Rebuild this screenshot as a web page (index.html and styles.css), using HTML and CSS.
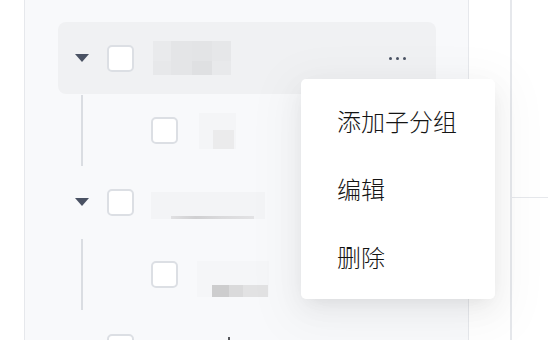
FILE: index.html
```html
<!DOCTYPE html>
<html lang="zh">
<head>
<meta charset="utf-8">
<link rel="stylesheet" href="styles.css">
</head>
<body>
<div class="app">
  <div class="gutter"></div>
  <div class="panel">
    <div class="row row-active">
      <span class="caret"></span>
      <span class="check"></span>
      <div class="mosaic m1">
        <i style="background:#e9eaec"></i><i style="background:#e4e5e7"></i><i style="background:#e3e4e6"></i><i style="background:#e6e7e9"></i>
        <i style="background:#e7e8ea"></i><i style="background:#e4e5e7"></i><i style="background:#dfe0e2"></i><i style="background:#e8e9eb"></i>
      </div>
      <span class="more"><b></b><b></b><b></b></span>
    </div>
    <div class="row child">
      <span class="guide"></span>
      <span class="check"></span>
      <div class="blob b1"><span class="b1-dark"></span></div>
    </div>
    <div class="row">
      <span class="caret"></span>
      <span class="check"></span>
      <div class="blob b2"><span class="b2-line"></span></div>
    </div>
    <div class="row child">
      <span class="guide"></span>
      <span class="check"></span>
      <div class="blob b3"><span class="b3-bar"></span></div>
    </div>
    <div class="row row-last">
      <span class="caret hidden"></span>
      <span class="check"></span>
      <div class="blob b4"><span class="dotmark d1"></span><span class="dotmark d2"></span></div>
    </div>
  </div>
  <div class="mid"></div>
  <div class="side">
    <div class="side-top"></div>
    <div class="side-bottom"></div>
  </div>
</div>
<ul class="menu">
  <li>添加子分组</li>
  <li>编辑</li>
  <li>删除</li>
</ul>
</body>
</html>
```
FILE: styles.css
```css
html, body {
  margin: 0;
  padding: 0;
  width: 548px;
  height: 340px;
  overflow: hidden;
  background: #ffffff;
  font-family: "Noto Sans CJK SC", "Noto Sans", sans-serif;
}
.app {
  display: flex;
  height: 340px;
  overflow: hidden;
}
.gutter {
  width: 24px;
  flex: none;
}
.panel {
  width: 445px;
  flex: none;
  background: #f8f9fb;
  border-left: 1px solid #e6e8ec;
  border-right: 1px solid #e6e8ec;
  padding: 22px 32px 0 33px;
  box-sizing: border-box;
  display: flex;
  flex-direction: column;
  overflow: hidden;
}
.mid {
  width: 41px;
  flex: none;
  border-right: 2px solid #e6e8ec;
}
.side {
  flex: 1;
  display: flex;
  flex-direction: column;
}
.side-top {
  height: 197px;
  border-bottom: 1px solid #e6e8ec;
}
.row {
  height: 72px;
  flex: none;
  display: flex;
  align-items: center;
  padding-left: 17px;
  padding-right: 30px;
  border-radius: 8px;
  position: relative;
}
.row-last {
  height: 30px;
  align-items: flex-start;
  padding-top: 24px;
}
.row-active {
  background: #f0f1f3;
}
.caret {
  width: 0;
  height: 0;
  border-left: 7px solid transparent;
  border-right: 7px solid transparent;
  border-top: 8px solid #4a5263;
  margin-right: 18px;
}
.caret.hidden {
  visibility: hidden;
}
.check {
  width: 27px;
  height: 27px;
  box-sizing: border-box;
  border: 2px solid #dcdfe4;
  border-radius: 5px;
  background: #ffffff;
  flex: none;
}
.child {
  padding-left: 23px;
}
.guide {
  align-self: stretch;
  width: 1.5px;
  background: #dadde2;
  margin: 1px 68px 0 0;
}
.mosaic {
  margin-left: 19px;
  width: 78px;
  height: 34px;
  display: grid;
  grid-template-columns: 18px 21px 20px 19px;
  grid-template-rows: 20px 14px;
  filter: blur(0.6px);
}
.mosaic i {
  display: block;
}
.more {
  margin-left: auto;
  display: flex;
  gap: 3.5px;
  margin-top: 1px;
}
.more b {
  width: 3.5px;
  height: 3.5px;
  border-radius: 50%;
  background: #4a5263;
}
.blob {
  position: relative;
}
.b1 {
  margin-left: 21px;
  width: 37px;
  height: 36px;
  background: #f4f5f7;
  margin-top: 2px;
}
.b1-dark {
  position: absolute;
  left: 14px;
  top: 17px;
  width: 21px;
  height: 19px;
  background: #ebebec;
}
.b2 {
  margin-left: 17px;
  width: 114px;
  height: 27px;
  background: #f3f4f6;
  margin-top: 6px;
  filter: blur(0.5px);
}
.b2-line {
  position: absolute;
  left: 20px;
  bottom: 0;
  width: 83px;
  height: 3px;
  background: linear-gradient(90deg, #e0e0e2, #cfcfd1 30%, #dadadc 60%, #e2e2e4);
}
.b3 {
  margin-left: 19px;
  width: 72px;
  height: 36px;
  background: #f5f6f8;
  margin-top: 10px;
}
.b3-bar {
  position: absolute;
  left: 15px;
  bottom: 0;
  width: 56px;
  height: 12px;
  background: linear-gradient(90deg, #cdcdce 0 30%, #dadadb 30% 55%, #e2e2e3 55% 100%);
}
.b4 {
  margin-left: 19px;
  width: 120px;
  height: 10px;
}
.dotmark {
  position: absolute;
  background: #a6a7aa;
  width: 2px;
  height: 3px;
}
.d1 { left: 29px; top: 6px; }
.d2 { left: 75px; top: 3px; height: 5px; background: #55575b; }
.menu {
  position: absolute;
  left: 301px;
  top: 79px;
  width: 194px;
  margin: 0;
  padding: 7px 0 9px;
  list-style: none;
  background: #ffffff;
  border-radius: 5px;
  box-shadow: 0 12px 48px 16px rgba(0, 0, 0, 0.035), 0 9px 28px 0 rgba(0, 0, 0, 0.05), 0 6px 16px -8px rgba(0, 0, 0, 0.08);
}
.menu li {
  height: 68px;
  display: flex;
  align-items: center;
  padding-left: 36px;
  font-size: 24px;
  font-weight: 300;
  color: #141414;
}
```
